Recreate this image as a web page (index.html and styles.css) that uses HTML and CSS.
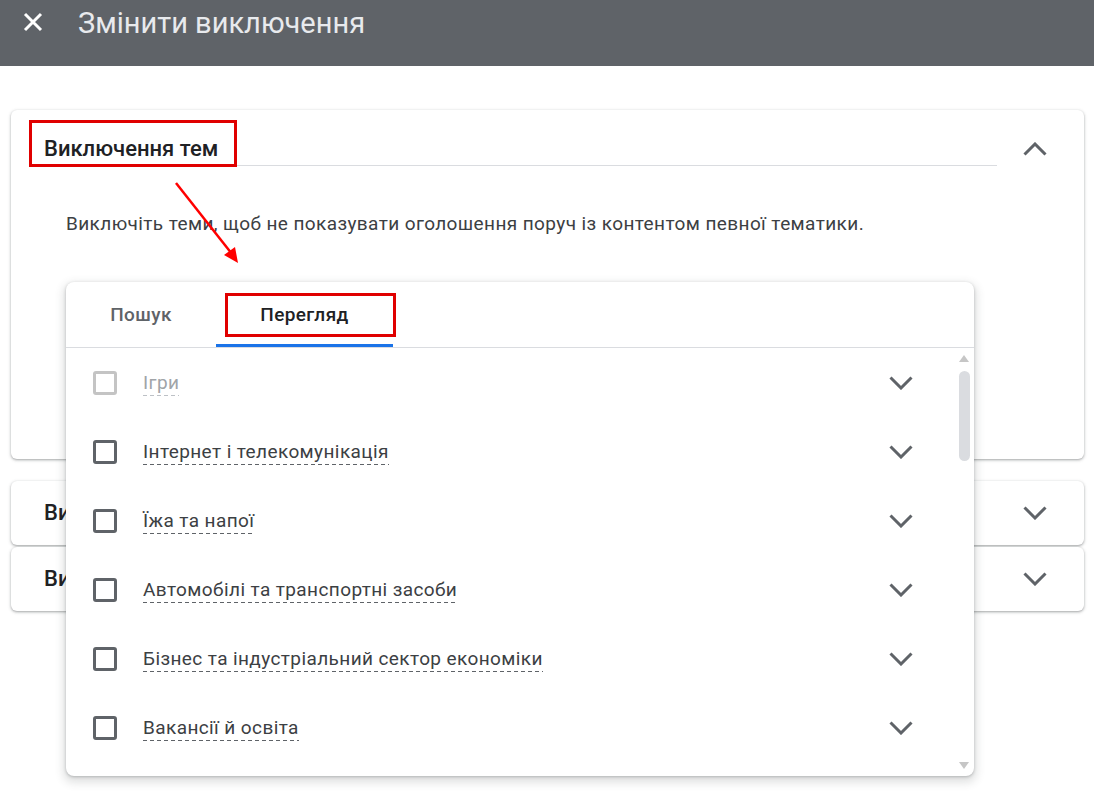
FILE: index.html
```html
<!DOCTYPE html>
<html lang="uk">
<head>
    <meta charset="UTF-8">
    <meta name="viewport" content="width=device-width, initial-scale=1.0">
    <title>Змінити виключення</title>
    <link rel="stylesheet" href="styles.css">
</head>
<body>
<div class="page">
    <header class="topbar">
        <div class="topbar-row">
            <svg class="close-icon" width="20" height="20" viewBox="0 0 20 20">
                <path d="M2 2 L18 18 M18 2 L2 18" stroke="#fff" stroke-width="3" fill="none"/>
            </svg>
            <h1 class="topbar-title">Змінити виключення</h1>
        </div>
    </header>

    <main class="content">
        <section class="card card-open">
            <div class="card-head">
                <div class="card-title-wrap">
                    <h2 class="card-title">Виключення тем</h2>
                </div>
                <svg class="chevron chevron-up" width="24" height="14" viewBox="0 0 24 14">
                    <polyline points="1.5,12.5 12,2 22.5,12.5" fill="none" stroke="#5f6368" stroke-width="3"/>
                </svg>
            </div>
            <p class="card-desc">Виключіть теми, щоб не показувати оголошення поруч із контентом певної тематики.</p>
        </section>

        <section class="card card-closed first-closed">
            <h2 class="card-title">Ви</h2>
            <svg class="chevron" width="24" height="14" viewBox="0 0 24 14">
                <polyline points="1.5,1.5 12,12 22.5,1.5" fill="none" stroke="#5f6368" stroke-width="3"/>
            </svg>
        </section>

        <section class="card card-closed">
            <h2 class="card-title">Ви</h2>
            <svg class="chevron" width="24" height="14" viewBox="0 0 24 14">
                <polyline points="1.5,1.5 12,12 22.5,1.5" fill="none" stroke="#5f6368" stroke-width="3"/>
            </svg>
        </section>
    </main>

    <!-- dropdown picker lying over the card -->
    <div class="picker">
        <div class="tabs">
            <div class="tab tab-search">Пошук</div>
            <div class="tab tab-browse active">Перегляд</div>
        </div>
        <div class="picker-body">
            <div class="topic-list">
                <div class="topic disabled">
                    <span class="checkbox"></span>
                    <span class="topic-name">Ігри</span>
                    <svg class="chevron" width="24" height="14" viewBox="0 0 24 14">
                        <polyline points="1.5,1.5 12,12 22.5,1.5" fill="none" stroke="#5f6368" stroke-width="3"/>
                    </svg>
                </div>
                <div class="topic">
                    <span class="checkbox"></span>
                    <span class="topic-name">Інтернет і телекомунікація</span>
                    <svg class="chevron" width="24" height="14" viewBox="0 0 24 14">
                        <polyline points="1.5,1.5 12,12 22.5,1.5" fill="none" stroke="#5f6368" stroke-width="3"/>
                    </svg>
                </div>
                <div class="topic">
                    <span class="checkbox"></span>
                    <span class="topic-name">Їжа та напої</span>
                    <svg class="chevron" width="24" height="14" viewBox="0 0 24 14">
                        <polyline points="1.5,1.5 12,12 22.5,1.5" fill="none" stroke="#5f6368" stroke-width="3"/>
                    </svg>
                </div>
                <div class="topic">
                    <span class="checkbox"></span>
                    <span class="topic-name">Автомобілі та транспортні засоби</span>
                    <svg class="chevron" width="24" height="14" viewBox="0 0 24 14">
                        <polyline points="1.5,1.5 12,12 22.5,1.5" fill="none" stroke="#5f6368" stroke-width="3"/>
                    </svg>
                </div>
                <div class="topic">
                    <span class="checkbox"></span>
                    <span class="topic-name">Бізнес та індустріальний сектор економіки</span>
                    <svg class="chevron" width="24" height="14" viewBox="0 0 24 14">
                        <polyline points="1.5,1.5 12,12 22.5,1.5" fill="none" stroke="#5f6368" stroke-width="3"/>
                    </svg>
                </div>
                <div class="topic">
                    <span class="checkbox"></span>
                    <span class="topic-name">Вакансії й освіта</span>
                    <svg class="chevron" width="24" height="14" viewBox="0 0 24 14">
                        <polyline points="1.5,1.5 12,12 22.5,1.5" fill="none" stroke="#5f6368" stroke-width="3"/>
                    </svg>
                </div>
            </div>
            <div class="scrollbar">
                <span class="scroll-up"></span>
                <span class="scroll-thumb"></span>
                <span class="scroll-down"></span>
            </div>
        </div>
    </div>

    <!-- red annotations -->
    <div class="mark mark-title"></div>
    <div class="mark mark-tab"></div>
    <svg class="arrow" width="80" height="90" viewBox="0 0 80 90">
        <line x1="2" y1="1" x2="58" y2="72" stroke="#f00" stroke-width="2.5"/>
        <polygon points="64,81 50,73 61,65" fill="#f00"/>
    </svg>
</div>
</body>
</html>
```

FILE: styles.css
```css
body {
    margin: 0;
    font-family: 'Roboto', 'Noto Sans', sans-serif;
    background-color: #fff;
    color: #3c4043;
}

.page {
    position: relative;
    width: 1094px;
    height: 792px;
    overflow: hidden;
}

/* top bar */
.topbar {
    height: 66px;
    background-color: #5f6368;
    padding-left: 23px;
    box-sizing: border-box;
}

.topbar-row {
    height: 44px;
    display: flex;
    align-items: center;
}

.close-icon {
    display: block;
}

.topbar-title {
    margin: 0 0 0 35px;
    padding-top: 2px;
    font-size: 29px;
    font-weight: 400;
    color: #e8eaed;
    line-height: 34px;
}

/* cards */
.content {
    padding: 44px 10px 0 11px;
}

.card {
    background-color: #fff;
    border-radius: 6px;
    box-shadow: 0 1px 2px rgba(60, 64, 67, 0.3), 0 1px 3px 1px rgba(60, 64, 67, 0.15);
}

.card-open {
    height: 349px;
    box-sizing: border-box;
}

.card-head {
    display: flex;
    align-items: flex-start;
}

.card-title-wrap {
    width: 968px;
    height: 56px;
    margin-left: 18px;
    padding-left: 15px;
    padding-bottom: 3px;
    box-sizing: border-box;
    border-bottom: 1px solid #dadce0;
    display: flex;
    align-items: flex-end;
}

.card-title {
    margin: 0;
    font-size: 22px;
    font-weight: 500;
    line-height: 26px;
    color: #202124;
}

.chevron {
    display: block;
    flex: none;
}

.chevron-up {
    margin: 32px 37px 0 auto;
}

.card-desc {
    margin: 46px 0 0 55px;
    font-size: 19px;
    letter-spacing: 0.4px;
    line-height: 24px;
    color: #3c4043;
}

.card-closed {
    height: 64px;
    display: flex;
    align-items: center;
    justify-content: space-between;
    padding: 0 37px 0 33px;
    margin-top: 2px;
}

.card-closed.first-closed {
    margin-top: 22px;
}

/* picker */
.picker {
    position: absolute;
    left: 66px;
    top: 282px;
    width: 908px;
    height: 494px;
    background-color: #fff;
    border-radius: 8px;
    box-shadow: 0 1px 3px rgba(60, 64, 67, 0.3), 0 4px 8px 3px rgba(60, 64, 67, 0.15);
    overflow: hidden;
}

.tabs {
    display: flex;
    height: 66px;
    box-sizing: border-box;
    border-bottom: 1px solid #dadce0;
}

.tab {
    position: relative;
    display: flex;
    align-items: center;
    justify-content: center;
    font-size: 19px;
    letter-spacing: 0.4px;
    font-weight: 500;
    color: #5f6368;
}

.tab-search {
    width: 150px;
}

.tab-browse {
    width: 177px;
}

.tab.active {
    color: #202124;
}

.tab.active::after {
    content: "";
    position: absolute;
    left: 0;
    right: 0;
    bottom: 0;
    height: 3px;
    background-color: #1a73e8;
}

.picker-body {
    display: flex;
    height: 428px;
}

.topic-list {
    flex: 1;
    padding-right: 45px;
}

.topic {
    height: 69px;
    display: flex;
    align-items: center;
    padding-left: 27px;
}

.checkbox {
    width: 24px;
    height: 24px;
    box-sizing: border-box;
    border: 3px solid #5f6368;
    border-radius: 3px;
    flex: none;
}

.topic-name {
    margin-left: 26px;
    margin-top: 2px;
    padding-bottom: 1px;
    font-size: 19px;
    letter-spacing: 0.4px;
    line-height: 24px;
    color: #3c4043;
    background: linear-gradient(to right, #5f6368 4px, transparent 4px) repeat-x left bottom / 7px 1px;
}

.topic .chevron {
    margin-left: auto;
}

.topic.disabled .checkbox {
    border-color: #c4c4c4;
}

.topic.disabled .topic-name {
    color: #a0a4a8;
    background-image: linear-gradient(to right, #bdc1c6 4px, transparent 4px);
}

.scrollbar {
    width: 12px;
    margin-right: 4px;
    display: flex;
    flex-direction: column;
    align-items: center;
}

.scroll-up {
    margin-top: 7px;
    width: 0;
    height: 0;
    border-left: 5px solid transparent;
    border-right: 5px solid transparent;
    border-bottom: 7px solid #c6c6c6;
}

.scroll-thumb {
    margin-top: 9px;
    width: 11px;
    height: 90px;
    border-radius: 6px;
    background-color: #dadce0;
}

.scroll-down {
    margin-top: auto;
    margin-bottom: 7px;
    width: 0;
    height: 0;
    border-left: 5px solid transparent;
    border-right: 5px solid transparent;
    border-top: 7px solid #c6c6c6;
}

/* annotations */
.mark {
    position: absolute;
    border: 3px solid #e00000;
    box-sizing: border-box;
}

.mark-title {
    left: 29px;
    top: 120px;
    width: 208px;
    height: 47px;
}

.mark-tab {
    left: 225px;
    top: 293px;
    width: 171px;
    height: 44px;
}

.arrow {
    position: absolute;
    left: 174px;
    top: 182px;
}
```
